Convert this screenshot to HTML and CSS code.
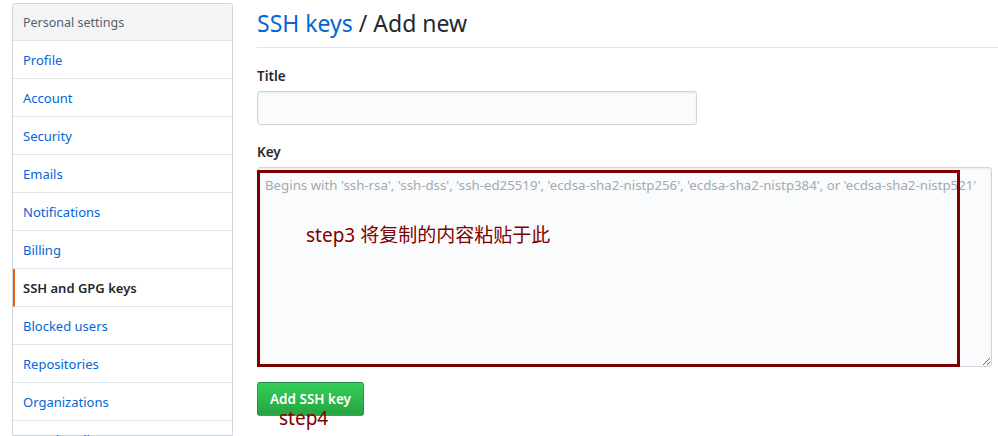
FILE: index.html
```html
<!DOCTYPE html>
<html>
<head>
<meta charset="utf-8">
<link rel="stylesheet" href="styles.css">
</head>
<body>
<div class="page">
  <nav class="menu">
    <div class="menu-head">Personal settings</div>
    <a class="menu-item">Profile</a>
    <a class="menu-item">Account</a>
    <a class="menu-item">Security</a>
    <a class="menu-item">Emails</a>
    <a class="menu-item">Notifications</a>
    <a class="menu-item">Billing</a>
    <a class="menu-item selected">SSH and GPG keys</a>
    <a class="menu-item">Blocked users</a>
    <a class="menu-item">Repositories</a>
    <a class="menu-item">Organizations</a>
    <a class="menu-item">Saved replies</a>
  </nav>
  <main class="content">
    <h2 class="subhead"><a class="crumb">SSH keys</a> / Add new</h2>
    <form class="form">
      <label class="label">Title</label>
      <input class="input title-input" type="text">
      <label class="label key-label">Key</label>
      <div class="key-wrap">
        <textarea class="input key-area" placeholder="Begins with 'ssh-rsa', 'ssh-dss', 'ssh-ed25519', 'ecdsa-sha2-nistp256', 'ecdsa-sha2-nistp384', or 'ecdsa-sha2-nistp521'"></textarea>
        <div class="annot-box"></div>
        <div class="annot step3">step3 将复制的内容粘贴于此</div>
      </div>
      <div class="btn-wrap">
        <button class="btn" type="button">Add SSH key</button>
        <div class="annot step4">step4</div>
      </div>
    </form>
  </main>
</div>
</body>
</html>
```

FILE: styles.css
```css
html, body {
  margin: 0;
  padding: 0;
  background: #fff;
  overflow: hidden;
}
body {
  font-family: "Noto Sans", "Open Sans", sans-serif;
  font-size: 14px;
  color: #24292e;
}
.page {
  display: flex;
  padding: 3px 0 0 12px;
  gap: 24px;
  height: 433px;
  overflow: hidden;
}
.menu {
  width: 219px;
  flex: none;
  border: 1px solid #d1d5da;
  border-radius: 3px 3px 0 0;
  display: flex;
  flex-direction: column;
}
.menu-head {
  height: 36px;
  line-height: 37px;
  padding-left: 10px;
  background: #f3f4f6;
  color: #586069;
  font-size: 12.5px;
  border-bottom: 1px solid #e1e4e8;
  flex: none;
}
.menu-item {
  height: 36px;
  padding-top: 1px;
  line-height: 37px;
  padding-left: 10px;
  color: #0366d6;
  font-size: 13px;
  border-bottom: 1px solid #e1e4e8;
  text-decoration: none;
  flex: none;
}
.menu-item.selected {
  color: #24292e;
  font-weight: 600;
  border-left: 2px solid #e36209;
  padding-left: 8px;
}
.content {
  flex: 1;
  min-width: 0;
}
.subhead {
  margin: 0;
  font-size: 23px;
  font-weight: 400;
  line-height: 36px;
  padding-top: 2px;
  padding-bottom: 6px;
  border-bottom: 1px solid #e1e4e8;
}
.crumb {
  color: #0366d6;
}
.form {
  display: flex;
  flex-direction: column;
  align-items: flex-start;
  padding-top: 18px;
}
.label {
  font-weight: 600;
  font-size: 13.5px;
  line-height: 20px;
  margin-bottom: 5px;
}
.key-label {
  margin-top: 17px;
}
.input {
  box-sizing: border-box;
  border: 1px solid #d1d5da;
  border-radius: 3px;
  background: #fafbfc;
  box-shadow: inset 0 1px 2px rgba(27,31,35,0.075);
  font-family: "Noto Sans", "Open Sans", sans-serif;
  font-size: 14px;
  color: #24292e;
}
.title-input {
  width: 440px;
  height: 34px;
}
.key-wrap {
  position: relative;
  width: 735px;
  height: 200px;
}
.key-area {
  width: 735px;
  height: 200px;
  padding: 8px 7px;
  resize: vertical;
  display: block;
  font-size: 13.25px;
}
.key-area::placeholder {
  color: #a3aab1;
}
.annot-box {
  position: absolute;
  left: 0;
  top: 3px;
  width: 703px;
  height: 197px;
  box-sizing: border-box;
  border: 3px solid #7f0000;
}
.annot {
  position: absolute;
  color: #7f0000;
  font-family: "Noto Sans", "Noto Sans CJK SC", sans-serif;
  font-size: 19px;
  line-height: 22px;
  white-space: nowrap;
}
.step3 {
  left: 49px;
  top: 57px;
}
.btn-wrap {
  position: relative;
  margin-top: 15px;
}
.btn {
  width: 107px;
  height: 34px;
  border: 1px solid rgba(27,31,35,0.2);
  border-radius: 3px;
  background: linear-gradient(#34d058, #28a745 90%);
  color: #fff;
  font-family: "Noto Sans", "Open Sans", sans-serif;
  font-weight: 600;
  font-size: 13.5px;
  padding: 0;
}
.step4 {
  left: 22px;
  top: 25px;
}
```
